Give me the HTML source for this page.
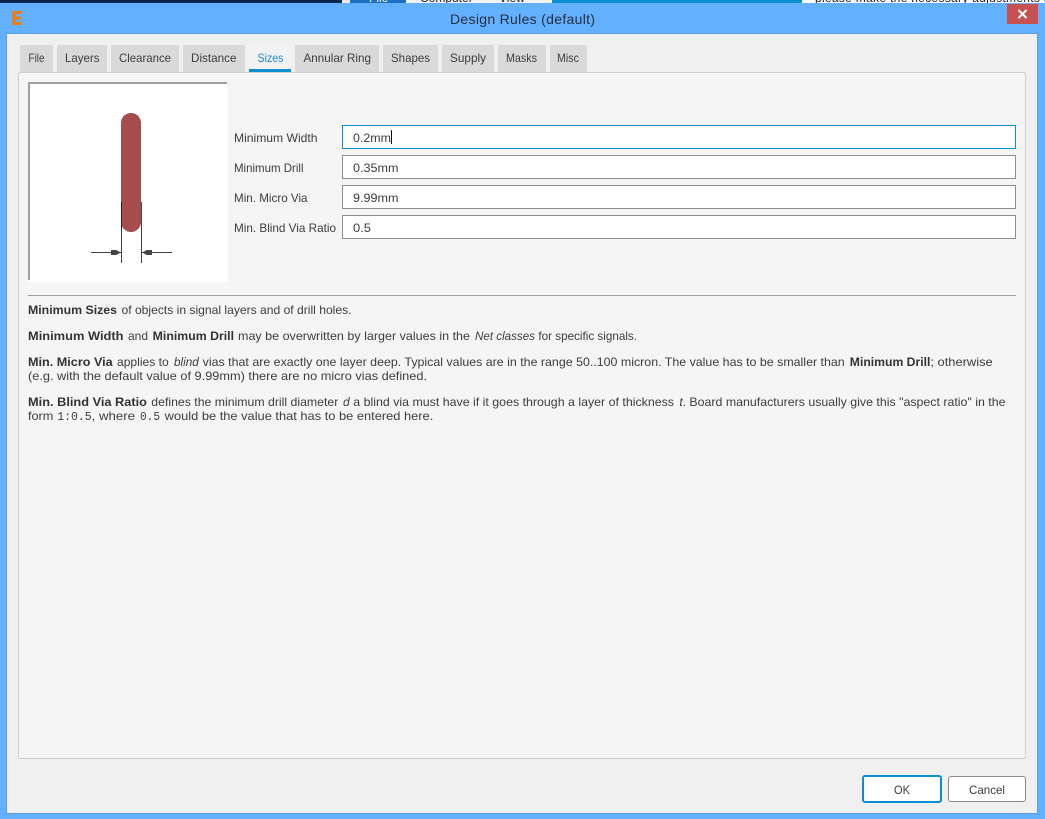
<!DOCTYPE html>
<html><head><meta charset="utf-8"><style>
html,body{margin:0;padding:0;width:1045px;height:819px;overflow:hidden;background:#62b0ff}
*{box-sizing:border-box}
body{position:relative;font-family:"Liberation Sans",sans-serif;font-size:12px;color:#3b3b3b}
.a{position:absolute}
.tab{position:absolute;top:45px;height:27px;background:#d9d9d9;border-radius:2px 2px 0 0}
.in{position:absolute;left:342px;width:674px;height:24px;background:#fff;border:1px solid #8f8f8f}
.btn{position:absolute;background:#fff;border-radius:3px}
svg text{font-family:"Liberation Sans",sans-serif;font-size:12px;fill:#3d3d3d}
svg text.b{font-weight:bold;fill:#333}
svg text.i{font-style:italic}
svg text.m{font-family:"Liberation Mono",monospace}
.s{position:absolute;white-space:nowrap;font-size:12px;line-height:14px;color:#222}
</style></head><body>
<div class="a" style="left:0;top:0;width:1045px;height:3px;overflow:hidden;background:#04254f">
  <div class="a" style="left:342px;top:0;width:8px;height:3px;background:#e8e8e8"></div>
  <div class="a" style="left:350px;top:0;width:56px;height:3px;background:#1a6fc0"></div>
  <div class="a" style="left:406px;top:0;width:146px;height:3px;background:#f2f2f2"></div>
  <div class="a" style="left:552px;top:0;width:250px;height:3px;background:#0a8fd0"></div>
  <div class="a" style="left:802px;top:0;width:243px;height:3px;background:#fff"></div>
  <div class="s" style="left:369px;top:-9px;color:#fff">File</div>
  <div class="s" style="left:420px;top:-9px">Computer</div>
  <div class="s" style="left:499px;top:-9px">View</div>
  <div class="s" style="left:815px;top:-9px;letter-spacing:.3px">please make the necessary adjustments a</div>
</div>

<div class="a" style="left:0;top:3px;width:1045px;height:30px;background:#62b0ff"></div>
<svg class="a" style="left:11px;top:10px" width="12" height="16"><path d="M1 1H11V4H5V6.500H10V9.500H5V12H11V15H1Z" fill="#e47f22"/></svg>
<div class="a" style="left:1007px;top:4px;width:31px;height:20px;background:#c75050"></div>
<svg class="a" style="left:1017px;top:9px" width="12" height="10"><path d="M1.500 1L9.500 9M9.500 1L1.500 9" stroke="#fff" stroke-width="2" fill="none"/></svg>

<div class="a" style="left:6px;top:33px;width:1032px;height:781px;background:#f0f0f0;border:1px solid #5a9ee0"></div>

<div class="tab" style="left:20px;width:33px"></div>
<div class="tab" style="left:57px;width:50px"></div>
<div class="tab" style="left:111px;width:68px"></div>
<div class="tab" style="left:183px;width:62px"></div>
<div class="tab" style="left:249px;width:42px;background:#f2f2f2;border-bottom:3px solid #0a8fd0"></div>
<div class="tab" style="left:295px;width:84px"></div>
<div class="tab" style="left:383px;width:55px"></div>
<div class="tab" style="left:442px;width:52px"></div>
<div class="tab" style="left:498px;width:48px"></div>
<div class="tab" style="left:550px;width:37px"></div>

<div class="a" style="left:18px;top:72px;width:1008px;height:687px;background:#f5f5f5;border:1px solid #cfcfcf;border-radius:2px"></div>

<svg class="a" style="left:28px;top:82px" width="200" height="200">
<rect width="200" height="200" fill="#fff"/>
<path d="M0 0H199V2H2V198H0Z" fill="#a0a0a0"/>
<path d="M93.500 120V181M113.500 120V181M63 170.500H93M114 170.500H144" stroke="#444" stroke-width="1" fill="none"/>
<rect x="93" y="31" width="20" height="119" rx="10" ry="10" fill="#a54c4c" shape-rendering="crispEdges"/>
<path d="M93.500 120V148" stroke="#3a1a1a" stroke-width="1" fill="none"/>
<path d="M83 168H88L93 170.500L88 173H83ZM124 168H119L114 170.500L119 173H124Z" fill="#444"/>
</svg>

<div class="in" style="top:125px;border-color:#0a8fd0"></div>
<div class="in" style="top:155px"></div>
<div class="in" style="top:185px"></div>
<div class="in" style="top:215px"></div>
<div class="a" style="left:391px;top:130px;width:1px;height:14px;background:#111"></div>

<div class="a" style="left:28px;top:295px;width:988px;height:1px;background:#a0a0a0"></div>

<div class="btn" style="left:862px;top:775px;width:80px;height:28px;border:2px solid #0a8fd0"></div>
<div class="btn" style="left:948px;top:776px;width:78px;height:26px;border:1px solid #8a8a8a"></div>

<svg class="a" style="left:0;top:0" width="1045" height="819">
<text x="450" y="24" textLength="145" style="font-size:14px;fill:#24303c">Design Rules (default)</text>

<text x="28.500" y="62" textLength="16" lengthAdjust="spacingAndGlyphs">File</text>
<text x="65" y="62" textLength="34.500" lengthAdjust="spacingAndGlyphs">Layers</text>
<text x="119" y="62" textLength="52" lengthAdjust="spacingAndGlyphs">Clearance</text>
<text x="191" y="62" textLength="45.500" lengthAdjust="spacingAndGlyphs">Distance</text>
<text x="257.500" y="62" textLength="26" lengthAdjust="spacingAndGlyphs" style="fill:#1a8cd8">Sizes</text>
<text x="303.500" y="62" textLength="67.500" lengthAdjust="spacingAndGlyphs">Annular Ring</text>
<text x="391" y="62" textLength="39" lengthAdjust="spacingAndGlyphs">Shapes</text>
<text x="450" y="62" textLength="36" lengthAdjust="spacingAndGlyphs">Supply</text>
<text x="506" y="62" textLength="31" lengthAdjust="spacingAndGlyphs">Masks</text>
<text x="557" y="62" textLength="22" lengthAdjust="spacingAndGlyphs">Misc</text>

<text x="234" y="142" textLength="83.500" lengthAdjust="spacingAndGlyphs">Minimum Width</text>
<text x="234" y="172" textLength="69.500" lengthAdjust="spacingAndGlyphs">Minimum Drill</text>
<text x="234" y="202" textLength="73.500" lengthAdjust="spacingAndGlyphs">Min. Micro Via</text>
<text x="234" y="232" textLength="102" lengthAdjust="spacingAndGlyphs">Min. Blind Via Ratio</text>
<text x="353" y="142" textLength="38" lengthAdjust="spacingAndGlyphs">0.2mm</text>
<text x="353" y="172" textLength="45.500" lengthAdjust="spacingAndGlyphs">0.35mm</text>
<text x="353" y="202" textLength="45.500" lengthAdjust="spacingAndGlyphs">9.99mm</text>
<text x="353" y="232" textLength="18" lengthAdjust="spacingAndGlyphs">0.5</text>

<text class="b" x="28" y="314" textLength="89" lengthAdjust="spacingAndGlyphs">Minimum Sizes</text>
<text x="121.500" y="314" textLength="230" lengthAdjust="spacingAndGlyphs">of objects in signal layers and of drill holes.</text>

<text class="b" x="28" y="340" textLength="95.500" lengthAdjust="spacingAndGlyphs">Minimum Width</text>
<text x="128" y="340" textLength="20" lengthAdjust="spacingAndGlyphs">and</text>
<text class="b" x="152.700" y="340" textLength="81.300" lengthAdjust="spacingAndGlyphs">Minimum Drill</text>
<text x="238" y="340" textLength="232" lengthAdjust="spacingAndGlyphs">may be overwritten by larger values in the</text>
<text class="i" x="475" y="340" textLength="60" lengthAdjust="spacingAndGlyphs">Net classes</text>
<text x="538.400" y="340" textLength="98.600" lengthAdjust="spacingAndGlyphs">for specific signals.</text>

<text class="b" x="28" y="366" textLength="84.700" lengthAdjust="spacingAndGlyphs">Min. Micro Via</text>
<text x="117" y="366" textLength="51.700" lengthAdjust="spacingAndGlyphs">applies to</text>
<text class="i" x="174" y="366" textLength="24.700" lengthAdjust="spacingAndGlyphs">blind</text>
<text x="202.700" y="366" textLength="642" lengthAdjust="spacingAndGlyphs">vias that are exactly one layer deep. Typical values are in the range 50..100 micron. The value has to be smaller than</text>
<text class="b" x="849.800" y="366" textLength="80.600" lengthAdjust="spacingAndGlyphs">Minimum Drill</text>
<text x="930.400" y="366" textLength="62.300" lengthAdjust="spacingAndGlyphs">; otherwise</text>

<text x="28" y="380" textLength="399" lengthAdjust="spacingAndGlyphs">(e.g. with the default value of 9.99mm) there are no micro vias defined.</text>

<text class="b" x="28" y="406" textLength="119" lengthAdjust="spacingAndGlyphs">Min. Blind Via Ratio</text>
<text x="151.300" y="406" textLength="187" lengthAdjust="spacingAndGlyphs">defines the minimum drill diameter</text>
<text class="i" x="343" y="406">d</text>
<text x="353.300" y="406" textLength="320.700" lengthAdjust="spacingAndGlyphs">a blind via must have if it goes through a layer of thickness</text>
<text class="i" x="679.400" y="406">t</text>
<text x="682.500" y="406" textLength="323" lengthAdjust="spacingAndGlyphs">. Board manufacturers usually give this "aspect ratio" in the</text>

<text x="28" y="420" textLength="25.300" lengthAdjust="spacingAndGlyphs">form</text>
<text class="m" x="57.300" y="420" textLength="34.400" lengthAdjust="spacingAndGlyphs">1:0.5</text>
<text x="91.700" y="420" textLength="43.300" lengthAdjust="spacingAndGlyphs">, where</text>
<text class="m" x="140" y="420" textLength="20" lengthAdjust="spacingAndGlyphs">0.5</text>
<text x="164.700" y="420" textLength="268.600" lengthAdjust="spacingAndGlyphs">would be the value that has to be entered here.</text>

<text x="894" y="794" textLength="16" lengthAdjust="spacingAndGlyphs">OK</text>
<text x="969" y="794" textLength="36" lengthAdjust="spacingAndGlyphs">Cancel</text>
</svg>
</body></html>
